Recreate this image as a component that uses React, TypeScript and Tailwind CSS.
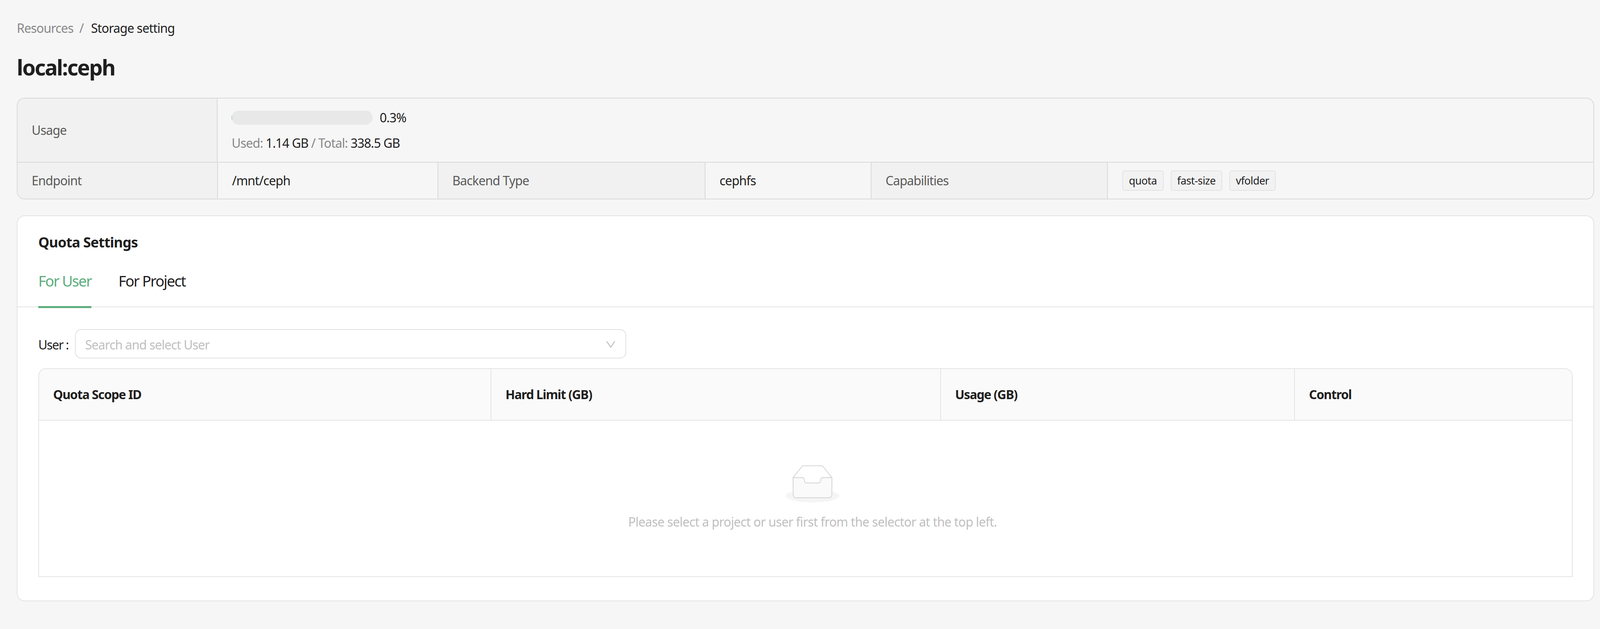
// window here is 4096 wide, not 4456: columns are fr-based so the page fills whatever it gets
const labelCell = "flex items-center bg-[#f1f1f1] pl-[36px] text-[#5a5a5a]";
const headCell = "flex items-center border-r-2 border-[#e4e4e4] pl-[36px]";

function Tag({ children }: { children: string }) {
  return (
    <span className="flex h-[52px] items-center rounded-[6px] border-2 border-[#e3e3e6] bg-[#f2f2f2] px-[15px] text-[27px] tracking-[-0.6px] text-[#1f1f1f]">
      {children}
    </span>
  );
}

function EmptyIcon() {
  return (
    <svg width="138" height="96" viewBox="0 0 64 41" preserveAspectRatio="none" xmlns="http://www.w3.org/2000/svg">
      <g transform="translate(0 1)" fill="none" fillRule="evenodd">
        <ellipse fill="#f5f5f5" cx="32" cy="33" rx="32" ry="7" />
        <g fillRule="nonzero" stroke="#d9d9d9">
          <path d="M55 12.76L44.854 1.258C44.367.474 43.656 0 42.907 0H21.093c-.749 0-1.46.474-1.947 1.257L9 12.761V22h46v-9.24z" />
          <path
            d="M41.613 15.931c0-1.605.994-2.93 2.227-2.931H55v18.137C55 33.26 53.68 35 52.05 35h-40.1C10.32 35 9 33.259 9 31.137V13h11.16c1.233 0 2.227 1.323 2.227 2.928v.022c0 1.605 1.005 2.901 2.237 2.901h14.752c1.232 0 2.237-1.308 2.237-2.913v-.007z"
            fill="#fafafa"
          />
        </g>
      </g>
    </svg>
  );
}

export default function App() {
  return (
    <div className="min-h-[1609px] bg-[#f6f6f6] pl-[43px] pr-[15px] pt-[40px] font-['Noto_Sans',sans-serif] text-[32px] tracking-[-1px] text-[#1f1f1f]">
      {/* breadcrumb */}
      <div className="flex h-[64px] items-center">
        <span className="w-[143px] text-[#888888]">Resources</span>
        <span className="w-[47px] pl-[17px] text-[#888888]">/</span>
        <span>Storage setting</span>
      </div>
      <h1 className="mt-[28px] flex h-[80px] items-center text-[55px] font-bold tracking-[-2.5px]">local:ceph</h1>

      {/* storage info */}
      <div className="mt-[38px] rounded-[20px] border-2 border-[#d9d9d9]">
        <div className="grid h-[164px] grid-cols-[512fr_3522fr] border-b-2 border-[#d9d9d9]">
          <div className={`${labelCell} rounded-tl-[18px] border-r-2 border-[#d9d9d9]`}>Usage</div>
          <div className="flex flex-col pl-[36px]">
            <div className="mt-[31px] flex h-[36px] items-center">
              <div className="h-[36px] w-[361px] overflow-hidden rounded-full bg-[#e8e8e8]">
                <div className="h-full w-[1px] bg-[#5dae77]" />
              </div>
              <span className="ml-[18px]">0.3%</span>
            </div>
            <div className="mt-[24px] flex h-[46px] items-center">
              <span className="text-[#888888]">Used:&nbsp;</span>
              <span>1.14 GB</span>
              <span className="text-[#888888]">&nbsp;/ Total:&nbsp;</span>
              <span>338.5 GB</span>
            </div>
          </div>
        </div>
        <div className="grid h-[92px] grid-cols-[513fr_564fr_684fr_425fr_605fr_1243fr]">
          <div className={`${labelCell} rounded-bl-[18px] border-r-2 border-[#d9d9d9]`}>Endpoint</div>
          <div className="flex items-center border-r-2 border-[#d9d9d9] pl-[36px]">/mnt/ceph</div>
          <div className={`${labelCell} border-r-2 border-[#d9d9d9]`}>Backend Type</div>
          <div className="flex items-center border-r-2 border-[#d9d9d9] pl-[36px]">cephfs</div>
          <div className={`${labelCell} border-r-2 border-[#d9d9d9]`}>Capabilities</div>
          <div className="flex items-center gap-[18px] pl-[37px]">
            <Tag>quota</Tag>
            <Tag>fast-size</Tag>
            <Tag>vfolder</Tag>
          </div>
        </div>
      </div>

      {/* quota settings card */}
      <div className="mt-[41px] h-[987px] rounded-[20px] border-2 border-[#e4e4e4] bg-white">
        <div className="ml-[53px] mt-[39px] flex h-[56px] items-center text-[36px] font-bold tracking-[-1px]">Quota Settings</div>
        <div className="mt-[26px] flex h-[112px] gap-[69px] border-b-2 border-[#e4e4e4] pl-[53px] text-[38px] tracking-[-1.9px]">
          <div className="-mb-[2px] flex h-[114px] items-start border-b-[5px] border-[#5cad7c] pt-[16px] text-[#5cad7c]">
            For User
          </div>
          <div className="flex items-start pt-[16px]">For Project</div>
        </div>

        <div className="ml-[53px] mt-[56px] flex h-[75px] items-center">
          <span className="w-[94px] pt-[4px] tracking-[-1.6px]">User :</span>
          <div className="flex h-[75px] w-[1411px] items-center justify-between rounded-[16px] border-2 border-[#e1e1e6] pl-[24px] pr-[24px] text-[#bfbfbf]">
            <span className="pt-[4px]">Search and select User</span>
            <svg width="27" height="29" viewBox="64 64 896 896" preserveAspectRatio="none" fill="#bfbfbf" className="mt-[4px]">
              <path d="M884 256h-75c-5.1 0-9.9 2.5-12.9 6.6L512 654.2 227.9 262.6c-3-4.1-7.8-6.6-12.9-6.6h-75c-6.5 0-10.3 7.4-6.5 12.7l352.6 486.1c12.8 17.6 39 17.6 51.7 0l352.6-486.1c3.9-5.3.1-12.7-6.4-12.7z" />
            </svg>
          </div>
        </div>

        {/* table */}
        <div className="mx-[53px] mt-[25px] rounded-t-[20px] border-2 border-[#e4e4e4]">
          <div className="grid h-[132px] grid-cols-[1158fr_1151fr_906fr_709fr] rounded-t-[18px] border-b-2 border-[#e4e4e4] bg-[#fafafa] font-bold tracking-[-1.4px]">
            <div className={headCell}>Quota Scope ID</div>
            <div className={headCell}>Hard Limit (GB)</div>
            <div className={headCell}>Usage (GB)</div>
            <div className="flex items-center pl-[36px]">Control</div>
          </div>
          <div className="flex h-[398px] flex-col items-center pl-[36px] pt-[113px] tracking-[-0.8px] text-[#bfbfbf]">
            <EmptyIcon />
            <p className="mt-[27px] leading-[46px]">Please select a project or user first from the selector at the top left.</p>
          </div>
        </div>
      </div>
    </div>
  );
}
